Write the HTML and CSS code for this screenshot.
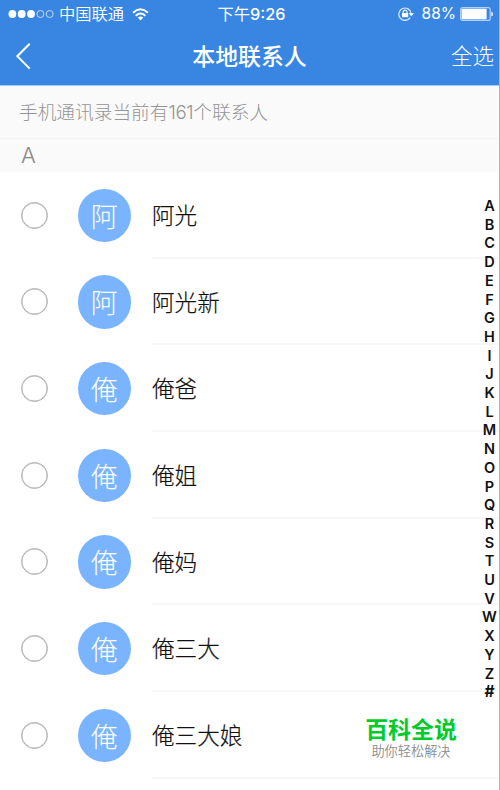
FILE: index.html
```
<!DOCTYPE html>
<html lang="zh-CN">
<head>
<meta charset="utf-8">
<title>本地联系人</title>
<link rel="stylesheet" href="styles.css">
</head>
<body>
<div class="screen">
  <header class="header">
    <div class="status">
      <div class="status-left">
        <svg class="signal" width="47" height="10" viewBox="0 0 47 10"><g fill="#fff"><circle cx="4.4" cy="5" r="3.9"/><circle cx="13.7" cy="5" r="3.9"/><circle cx="23" cy="5" r="3.9"/></g><g fill="none" stroke="#c5dcf8" stroke-width="1"><circle cx="32.4" cy="5" r="3.5"/><circle cx="41.7" cy="5" r="3.5"/></g></svg>
        <span class="carrier">中国联通</span>
        <svg class="wifi" width="17" height="13" viewBox="0 0 17 13"><g fill="none" stroke="#fff" stroke-width="1.9"><path d="M1 4.7Q8.5-2 16 4.7"/><path d="M3.7 7.7Q8.5 3.5 13.3 7.7"/></g><path d="M5.7 9.5Q8.5 7.3 11.3 9.5L8.5 12.4z" fill="#fff"/></svg>
      </div>
      <span class="time">下午<span class="clock">9:26</span></span>
      <div class="status-right">
        <svg class="lock" width="17" height="14" viewBox="0 0 17 14"><path d="M12.2 10.7A6.2 6.2 0 1 1 13.2 6.5" fill="none" stroke="#dceafb" stroke-width="1.2"/><path d="M10.6 6.2H16l-2.7 3z" fill="#fff"/><path d="M4 6h6.2v4.2H4z" fill="#fff"/><path d="M5.2 6V5a1.9 1.9 0 0 1 3.8 0v1" fill="none" stroke="#fff" stroke-width="1.1"/></svg>
        <span class="percent">88%</span>
        <svg class="battery" width="34" height="14" viewBox="0 0 34 14"><rect x=".6" y=".6" width="29.6" height="12.8" rx="2" fill="none" stroke="#b5d2f6" stroke-width="1.2"/><rect x="1.6" y="1.8" width="25" height="10.4" rx=".6" fill="#fff"/><path d="M31.2 4.5q2 .5 2 2.5t-2 2.5z" fill="#d5e6fb"/></svg>
      </div>
    </div>
    <nav class="nav">
      <svg class="back" width="16" height="28" viewBox="0 0 16 28"><path d="M13.7 0.8L1.3 13.2 13.7 25.6" fill="none" stroke="#fff" stroke-width="2"/></svg>
      <h1 class="title">本地联系人</h1>
      <span class="select-all">全选</span>
    </nav>
  </header>
  <div class="summary">手机通讯录当前有<span class="count">161</span>个联系人</div>
  <div class="section">A</div>
  <main class="list">
    <div class="row"><span class="check"></span><span class="avatar">阿</span><span class="name">阿光</span></div>
    <div class="row"><span class="check"></span><span class="avatar">阿</span><span class="name">阿光新</span></div>
    <div class="row"><span class="check"></span><span class="avatar">俺</span><span class="name">俺爸</span></div>
    <div class="row"><span class="check"></span><span class="avatar">俺</span><span class="name">俺姐</span></div>
    <div class="row"><span class="check"></span><span class="avatar">俺</span><span class="name">俺妈</span></div>
    <div class="row"><span class="check"></span><span class="avatar">俺</span><span class="name">俺三大</span></div>
    <div class="row"><span class="check"></span><span class="avatar">俺</span><span class="name">俺三大娘</span></div>
  </main>
  <div class="index"><span>A</span><span>B</span><span>C</span><span>D</span><span>E</span><span>F</span><span>G</span><span>H</span><span>I</span><span>J</span><span>K</span><span>L</span><span>M</span><span>N</span><span>O</span><span>P</span><span>Q</span><span>R</span><span>S</span><span>T</span><span>U</span><span>V</span><span>W</span><span>X</span><span>Y</span><span>Z</span><span class="hash">#</span></div>
  <div class="watermark"><div class="brand">百科全说</div><div class="slogan">助你轻松解决</div></div>
</div>
</body>
</html>
```
FILE: styles.css
```
* { box-sizing: border-box; }
body {
  margin: 0;
  font-family: Inter, "Noto Sans CJK SC", sans-serif;
  font-weight: 300;
  background: #fff;
}
.screen {
  position: relative;
  width: 500px;
  height: 790px;
  overflow: hidden;
  border-right: 1px solid #b4b4b4;
}
.header {
  height: 85px;
  margin-right: -1px;
  background: #3985e2;
  color: #fff;
}
.status {
  display: grid;
  grid-template-columns: 1fr auto 1fr;
  align-items: center;
  height: 28px;
  padding: 0 6px 0 8px;
  font-size: 16.3px;
  line-height: 28px;
}
.status-left, .status-right { display: flex; align-items: center; }
.status-right { justify-content: flex-end; }
.carrier { margin-left: 4px; font-weight: 350; }
.wifi { margin-left: 8px; }
.time { font-weight: 400; padding-left: 1px; }
.clock { font-weight: 500; }
.percent { margin: 0 4px 0 7px; font-weight: 400; font-size: 15.5px; }
.nav {
  display: grid;
  grid-template-columns: 1fr auto 1fr;
  align-items: center;
  height: 55px;
  padding: 0 6px 0 16px;
}
.title { margin: 2px 0 0 -11px; font-size: 22.9px; line-height: 55px; font-weight: 500; }
.select-all { justify-self: end; margin-top: -4px; font-size: 21.5px; }
.summary {
  height: 53px;
  padding-left: 19px;
  background: #fafafa;
  border-top: 1px solid #a9cdf5;
  font-size: 18.7px;
  line-height: 53px;
  color: #959595;
}
.count { letter-spacing: -0.4px; }
.section {
  height: 34px;
  padding-left: 21px;
  border-top: 1px solid #f4f4f4;
  background: #fafafa;
  color: #888;
  font-size: 22px;
  line-height: 33px;
}
.row {
  display: flex;
  align-items: center;
  height: 86.67px;
  padding-left: 21px;
}
.check {
  width: 27px;
  height: 27px;
  border: 1px solid #b0b0b0;
  border-radius: 50%;
  box-shadow: inset 0 0 0 0.5px #b0b0b0;
}
.avatar {
  width: 53.5px;
  height: 53.5px;
  margin: 0 21px 0 29.5px;
  border-radius: 50%;
  background: #7ab4ff;
  color: #fff;
  font-size: 27px;
  line-height: 57px;
  text-align: center;
}
.name {
  flex: 1;
  height: 100%;
  border-bottom: 2px solid #f7f7f7;
  color: #111;
  font-size: 22.6px;
  font-weight: 300;
  -webkit-text-stroke: 0.2px #111;
  line-height: 87px;
}
.index {
  position: absolute;
  top: 197px;
  right: 0;
  width: 19px;
  color: #111;
  font-size: 14.5px;
  font-weight: 600;
  text-align: center;
}
.index span { display: block; height: 18.71px; line-height: 18.71px; }
.index .hash { font-size: 15.5px; font-weight: 700; }
.watermark {
  position: absolute;
  top: 716px;
  left: 365px;
  width: 92px;
  text-align: center;
  white-space: nowrap;
}
.brand { color: #00cb2d; font-size: 22.9px; font-weight: 700; line-height: 28px; }
.slogan { color: #8c8c8c; font-size: 13.2px; font-weight: 350; line-height: 15px; }
```
